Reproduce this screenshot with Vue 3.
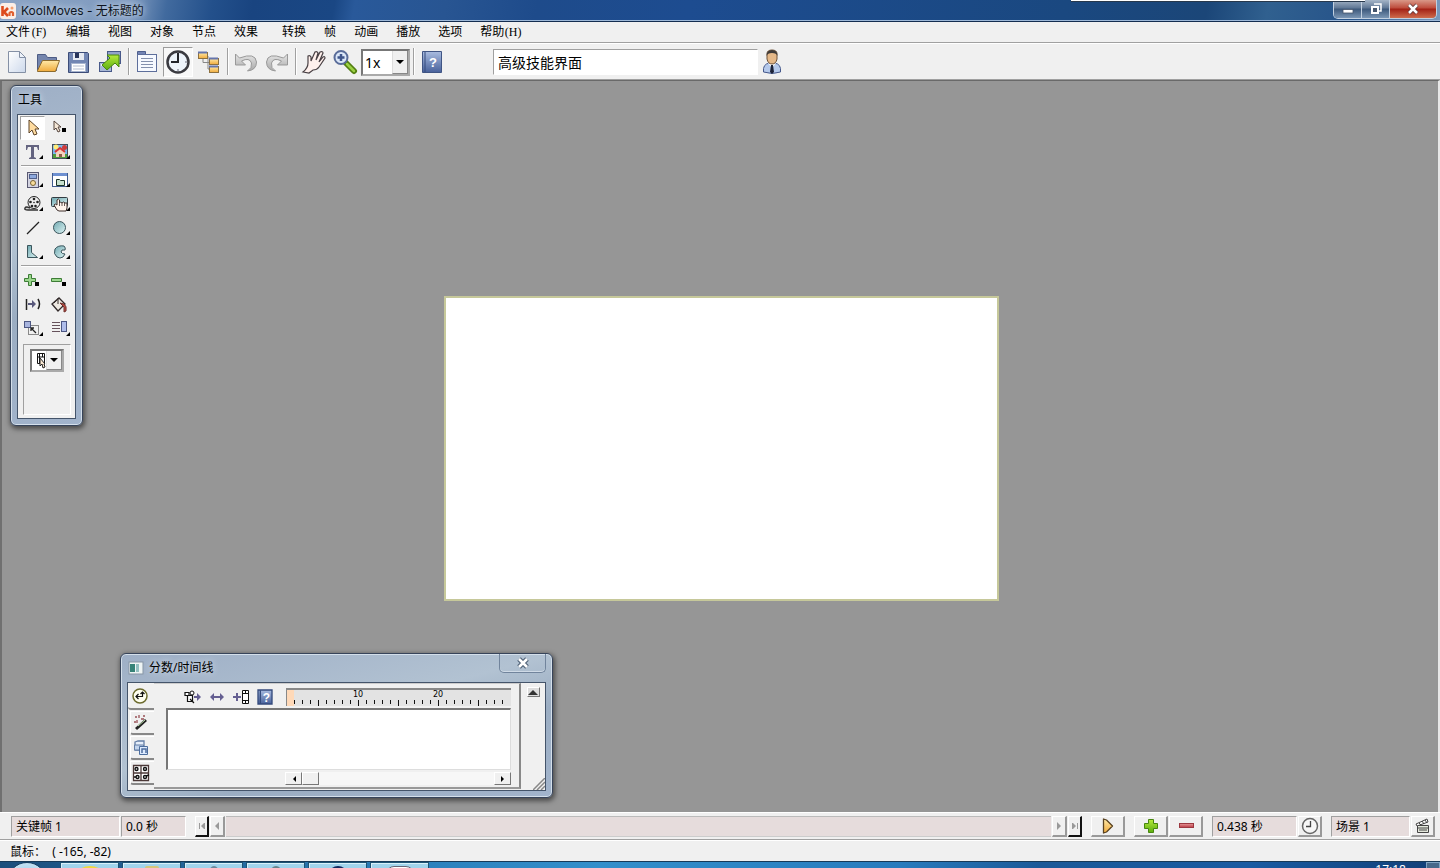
<script setup>
import { ref } from 'vue'

const menus = [
  { label: '文件', key: '(F)' },
  { label: '编辑' },
  { label: '视图' },
  { label: '对象' },
  { label: '节点' },
  { label: '效果', wide: true },
  { label: '转换' },
  { label: '帧' },
  { label: '动画' },
  { label: '播放' },
  { label: '选项' },
  { label: '帮助', key: '(H)' }
]
const ticks = Array.from({ length: 27 }, (_, i) => i + 2)
const skill = ref('高级技能界面')
</script>

<template>
  <div class="app">
    <svg class="defs" aria-hidden="true">
      <defs>
        <linearGradient id="gPage" x1="0" y1="0" x2="1" y2="1"><stop offset="0" stop-color="#fff" /><stop offset="1" stop-color="#cdd9ec" /></linearGradient>
        <linearGradient id="gFolder" x1="0" y1="0" x2="0" y2="1"><stop offset="0" stop-color="#ffe9a8" /><stop offset="1" stop-color="#f0ab3c" /></linearGradient>
        <linearGradient id="gGreen" x1="0" y1="0" x2="0" y2="1"><stop offset="0" stop-color="#b5ea3c" /><stop offset="1" stop-color="#5cae10" /></linearGradient>
        <linearGradient id="gBlue" x1="0" y1="0" x2="0" y2="1"><stop offset="0" stop-color="#a9bce0" /><stop offset="1" stop-color="#48619b" /></linearGradient>
        <linearGradient id="gGray" x1="0" y1="0" x2="0" y2="1"><stop offset="0" stop-color="#e6e6e6" /><stop offset="1" stop-color="#a8a8a8" /></linearGradient>
        <linearGradient id="gTeal" x1="0" y1="0" x2="1" y2="1"><stop offset="0" stop-color="#6fa8b0" /><stop offset="1" stop-color="#def4f4" /></linearGradient>
        <linearGradient id="gRed" x1="0" y1="0" x2="0" y2="1"><stop offset="0" stop-color="#e79a9a" /><stop offset="1" stop-color="#b93a44" /></linearGradient>
      </defs>
    </svg>

    <header class="titlebar">
      <svg class="logo" width="16" height="16" viewBox="0 0 16 16">
        <rect width="16" height="16" rx="3" fill="#fbeee6" />
        <path d="M2.500 3v10M8 5L4 9l4 4" fill="none" stroke="#dd4a1c" stroke-width="2.600" />
        <path d="M9.500 13V9.500M9.500 10q2-2 3.500 0v3" fill="none" stroke="#e06030" stroke-width="2.200" />
        <circle cx="12" cy="5" r="1.500" fill="#f4a070" />
      </svg>
      <span class="app-title">KoolMoves - 无标题的</span>
      <span class="sliver"></span>
      <div class="win-buttons">
        <button aria-label="最小化"><svg width="12" height="12" viewBox="0 0 12 12"><rect x="1" y="6.500" width="10" height="3.500" fill="#fff" stroke="#46566d" stroke-width=".8" /></svg></button>
        <button aria-label="还原"><svg width="12" height="12" viewBox="0 0 12 12"><path d="M4 1h7v7h-2" fill="none" stroke="#fff" stroke-width="1.500" /><rect x="2" y="4" width="6" height="6" fill="#46566d" stroke="#fff" stroke-width="2" /></svg></button>
        <button class="close" aria-label="关闭"><svg width="12" height="12" viewBox="0 0 12 12"><path d="M2 2l8 8M10 2l-8 8" stroke="#5b3436" stroke-width="4" /><path d="M2 2l8 8M10 2l-8 8" stroke="#fff" stroke-width="2.500" /></svg></button>
      </div>
    </header>

    <nav class="menubar">
      <button v-for="m in menus" :key="m.label" :class="{ wide: m.wide }">{{ m.label }}<span v-if="m.key" class="key">{{ m.key }}</span></button>
    </nav>

    <div class="toolbar">
      <button aria-label="新建"><svg width="24" height="24" viewBox="0 0 24 24"><path d="M3.500 1.500h11l6 6v15h-17z" fill="url(#gPage)" stroke="#8490a5" /><path d="M14.500 1.500v6h6z" fill="#eef3fa" stroke="#8490a5" /></svg></button>
      <button aria-label="打开"><svg width="26" height="24" viewBox="0 0 26 24"><path d="M2.500 20.500v-16h8l2 3h9v13z" fill="#7485ad" stroke="#4d5c85" /><path d="M2.500 20.500l5-10h17l-4 11h-18z" fill="url(#gFolder)" stroke="#8d6b2e" /></svg></button>
      <button aria-label="保存"><svg width="24" height="24" viewBox="0 0 24 24"><path d="M1.500 2.500h19l1 1v19h-20z" fill="#7286b3" stroke="#3c4c78" /><rect x="6" y="3" width="11" height="7" fill="#e6eaf2" /><rect x="8" y="3" width="4" height="5" fill="#28345a" /><rect x="4.500" y="13.500" width="14" height="8" fill="#fff" stroke="#a7b4cf" /><path d="M6 16h11M6 19h11" stroke="#b4bdd0" /></svg></button>
      <button aria-label="导出"><svg width="24" height="24" viewBox="0 0 24 24"><rect x="9.500" y="1.500" width="13" height="12" fill="#92a3ca" stroke="#48598a" /><rect x="1.500" y="12.500" width="12" height="9" fill="#a8b7d6" stroke="#48598a" /><path d="M3 15h9" stroke="#edf2fb" stroke-width="2" /><path d="M9 5h12v12l-4-4-8 7-5-5 8-7z" fill="url(#gGreen)" stroke="#47870f" /></svg></button>
      <i class="sep"></i>
      <button aria-label="属性"><svg width="24" height="24" viewBox="0 0 24 24"><path d="M2.500 5.500v-4h8v4" fill="#7384b4" stroke="#4d5e8c" /><rect x="2.500" y="4.500" width="19" height="17" fill="#f6f9ff" stroke="#5d6e9b" /><path d="M6 8.500h12M6 11.500h12M6 14.500h12M6 17.500h12" stroke="#8390ad" /></svg></button>
      <button class="on" aria-label="时间线" aria-pressed="true"><svg width="26" height="26" viewBox="0 0 26 26"><circle cx="13" cy="13" r="10.500" fill="#edf3fa" stroke="#3a3a40" stroke-width="2.500" /><path d="M13 4v9H6" fill="none" stroke="#22242a" stroke-width="2" /><path d="M13 20v2M20 13h2" stroke="#667" /></svg></button>
      <button aria-label="结构"><svg width="24" height="24" viewBox="0 0 24 24"><path d="M6 8v4.500h8M11 6v13h4" fill="none" stroke="#888" /><g fill="url(#gFolder)" stroke="#8d7140"><rect x="1.500" y="2.500" width="9" height="6" /><rect x="12.500" y="8.500" width="9" height="6" /><rect x="12.500" y="16.500" width="9" height="6" /></g><path d="M1 2.500h9M12 8.500h9M12 16.500h9" stroke="#6474ac" stroke-width="2" /></svg></button>
      <i class="sep"></i>
      <button aria-label="撤销"><svg width="24" height="24" viewBox="0 0 24 24"><path d="M1.500 4v11h10l-4-4q8-4 10 2 1 5-4 8 9-1 9-9-1-10-17-4z" fill="url(#gGray)" stroke="#999" /></svg></button>
      <button aria-label="重做"><svg width="24" height="24" viewBox="0 0 24 24"><path d="M22.500 4v11h-10l4-4q-8-4-10 2-1 5 4 8-9-1-9-9 1-10 17-4z" fill="url(#gGray)" stroke="#999" /></svg></button>
      <i class="sep"></i>
      <button aria-label="平移"><svg width="26" height="26" viewBox="0 0 26 26"><path d="M2 23q5-4 5-9L7 7q2-1 3 1v4l4-9q2-1 3 1l-2 7 4-8q3-1 3 1l-4 9 4-5q2-1 2 1l-6 9q-2 3-6 3l-4 3z" fill="#fff1ed" stroke="#484044" stroke-width="1.200" /></svg></button>
      <button aria-label="缩放"><svg width="26" height="26" viewBox="0 0 26 26"><path d="M14 14l8 8" stroke="#527e10" stroke-width="6" stroke-linecap="round" /><path d="M15 15l7 7" stroke="#9bd043" stroke-width="2.500" stroke-linecap="round" /><circle cx="9" cy="8.500" r="6.500" fill="#dbe7f8" stroke="#596c99" stroke-width="2" /><path d="M9 5v7M5.500 8.500h7" stroke="#3e558b" stroke-width="2.500" /></svg></button>
      <span class="combo zoom-combo">
        <select aria-label="缩放倍数"><option>1x</option></select><i class="drop"></i>
      </span>
      <i class="sep"></i>
      <button aria-label="帮助"><svg width="24" height="24" viewBox="0 0 24 24"><path d="M2.500 1.500h19v21h-19z" fill="url(#gBlue)" stroke="#405584" /><path d="M5 2v20" stroke="#344a7c" /><text class="help-mark" x="13" y="17" text-anchor="middle">?</text></svg></button>
      <input v-model="skill" class="skill" type="text" aria-label="技能界面" />
      <button class="user" aria-label="用户"><svg width="20" height="26" viewBox="0 0 20 26"><path d="M1.500 23q-1-8 6-9h5q7 1 6 9-8 3-17 0z" fill="#b5c9eb" stroke="#46598c" /><path d="M6 14l4 5 4-5z" fill="#fff" /><path d="M9 16h2l1 7-2 2-2-2z" fill="#1c2238" /><path d="M5 5q0-4 5-4t5 4v5q-1 5-5 5t-5-5z" fill="#e5b888" stroke="#6c5137" /><path d="M4.500 7q0-6 5.500-6t5.500 6q-1-3-5.500-3T4.500 7z" fill="#3e3a38" /></svg></button>
    </div>

    <main class="stage">
      <div class="canvas"></div>

      <section class="float tools">
        <h2>工具</h2>
        <div class="tool-body">
          <div class="grid">
            <button class="on" aria-label="选择"><svg viewBox="0 0 24 24"><path d="M8 4v13l3-3 2 5 3-1-2-5h4z" fill="#ffdca0" stroke="#5e4428" /></svg></button>
            <button aria-label="节点选择"><svg viewBox="0 0 24 24"><path d="M6 5v9l2-2 2 4 2-1-2-4h3z" fill="#f5e8d8" stroke="#54443d" /><path d="M14 12h4v4h-4z" /></svg></button>
            <button aria-label="文字"><svg viewBox="0 0 24 24"><path d="M5 5h13v5h-1l-1-3h-3v10l2 1v1H8v-1l2-1V7H7l-1 3H5z" fill="#646480" /><path d="M22 15v4h-4z" /></svg></button>
            <button aria-label="图片"><svg viewBox="0 0 24 24"><rect x="4.500" y="4.500" width="15" height="14" fill="#79b7ed" stroke="#454e5d" /><path d="M5 14h14v4H5z" fill="#4d9d3c" /><circle cx="8" cy="7" r="2.500" fill="#ffec77" /><path d="M8 12l4-4 5 4v5H8z" fill="#f4d2bd" /><path d="M7 12l5-4 5 4" fill="none" stroke="#d83535" stroke-width="2" /><path d="M11 14h3v3h-3z" fill="#8d5b48" /><circle cx="16.500" cy="7.500" r="2.500" fill="#cf3a3a" /><path d="M22 15v4h-4z" /></svg></button>
          </div>
          <i class="rule"></i>
          <div class="grid">
            <button aria-label="播放器"><svg viewBox="0 0 24 24"><rect x="6.500" y="4.500" width="11" height="15" fill="#d4d4e1" stroke="#595971" /><rect x="8.500" y="6.500" width="7" height="4" fill="#8da8dd" stroke="#50608c" /><circle cx="12" cy="15" r="2.500" fill="#f8dd9b" stroke="#796335" /><path d="M22 15v4h-4z" /></svg></button>
            <button aria-label="组件"><svg viewBox="0 0 24 24"><rect x="4.500" y="5.500" width="15" height="13" fill="#fff" stroke="#405b8d" /><path d="M5 6.500h14" stroke="#6e90d1" stroke-width="3" /><path d="M8.500 17.500v-6h3l1 1h4v5z" fill="#c7e0cf" stroke="#1c352b" /><path d="M22 15v4h-4z" /></svg></button>
            <button aria-label="影片"><svg viewBox="0 0 24 24"><path d="M9 16q-4-2-5 0t3 2h10" fill="#d2d2d2" stroke="#333" stroke-width="1.500" /><circle cx="13" cy="10.500" r="6" fill="#eee" stroke="#222" /><g fill="#222"><circle cx="13" cy="7" r="1.300" /><circle cx="16.500" cy="10" r="1.300" /><circle cx="14.500" cy="14" r="1.300" /><circle cx="11" cy="14" r="1.300" /><circle cx="9.500" cy="10" r="1.300" /><circle cx="13" cy="10.500" r=".8" /></g><path d="M22 15v4h-4z" /></svg></button>
            <button aria-label="按钮"><svg viewBox="0 0 24 24"><rect x="3.500" y="5.500" width="16" height="9" rx="1" fill="url(#gTeal)" stroke="#333c42" /><path d="M9 18l-3-5q1-2 3 0V8q1.500-2 2.500 0v3l1-1 1.500 1 1.500-1 1.500 1 2 0v5l-1 3h-7z" fill="#fff4ec" stroke="#3e302d" /><path d="M11.500 11v3M14 11v3M16.500 11v3" stroke="#3e302d" stroke-width=".8" /><path d="M22 15v4h-4z" /></svg></button>
            <button aria-label="直线"><svg viewBox="0 0 24 24"><path d="M6 18L18 6" stroke="#222" stroke-width="1.300" /></svg></button>
            <button aria-label="椭圆"><svg viewBox="0 0 24 24"><circle cx="11.500" cy="11.500" r="6" fill="url(#gTeal)" stroke="#3b555c" /><path d="M22 15v4h-4z" /></svg></button>
            <button aria-label="多边形"><svg viewBox="0 0 24 24"><path d="M6.500 5.500h4v7l6 5h-10z" fill="url(#gTeal)" stroke="#3b555c" /><path d="M22 15v4h-4z" /></svg></button>
            <button aria-label="曲线形状"><svg viewBox="0 0 24 24"><path d="M16 6q2 2 1 4-4-1-4 2 1 2 4 2l-2 3q-3 2-6 0-4-3-2-8 3-4 9-3z" fill="url(#gTeal)" stroke="#3b555c" /><path d="M22 15v4h-4z" /></svg></button>
          </div>
          <i class="rule"></i>
          <div class="grid lower">
            <button aria-label="添加节点"><svg viewBox="0 0 24 24"><path d="M7.500 5.500h3v4h4v3h-4v4h-3v-4h-4v-3h4z" fill="#9bd78d" stroke="#3d7c36" /><path d="M14 13h4v4h-4z" /></svg></button>
            <button aria-label="删除节点"><svg viewBox="0 0 24 24"><path d="M3.500 9.500h10v3h-10z" fill="#9bd78d" stroke="#3d7c36" /><path d="M14 13h4v4h-4z" /></svg></button>
            <button aria-label="变形"><svg viewBox="0 0 24 24"><path d="M5.500 6v11M17 6q3 5 0 10" fill="none" stroke="#222" stroke-width="1.500" /><path d="M7 10h4V7l4 4-4 4v-3H7z" fill="#59597c" /></svg></button>
            <button aria-label="填充"><svg viewBox="0 0 24 24"><path d="M4 11l7-6 6 6-7 7z" fill="#eee9e2" stroke="#332b2b" stroke-width="1.300" /><path d="M10 5v6M6 10l5-5" stroke="#332b2b" /><path d="M12 10l4 1q3 2 2 7l-2 1v-5z" fill="#bd4b42" stroke="#70322e" /></svg></button>
            <button aria-label="缩放对象"><svg viewBox="0 0 24 24"><path d="M7.500 8.500h10v9h-10z" fill="none" stroke="#222" stroke-dasharray="1 1" /><rect x="3.500" y="4.500" width="6" height="6" fill="#a7b4de" stroke="#4c5783" /><path d="M10 11l5 5M10 14v-3h3" fill="none" stroke="#222" stroke-width="1.300" /><path d="M22 15v4h-4z" /></svg></button>
            <button aria-label="排列"><svg viewBox="0 0 24 24"><path d="M4 5.500h8M4 8.500h8M4 11.500h8M4 14.500h8" stroke="#66525b" /><rect x="13.500" y="4.500" width="5" height="10" fill="#afbdea" stroke="#4c5783" /><path d="M22 15v4h-4z" /></svg></button>
          </div>
          <div class="options">
            <span class="combo tool-combo">
              <select aria-label="工具选项"><option></option></select>
              <svg class="tool-icon" width="10" height="18" viewBox="0 0 10 18"><path d="M1.500 1.500h7v10h-7zM3.500 1v10M6.500 1v4M1 5h8" fill="#fff" stroke="#111" /><path d="M4 6v8l2-2 1 4 2-1-1-3h1z" fill="#fce9d3" stroke="#222" /></svg>
              <i class="drop"></i>
            </span>
          </div>
        </div>
      </section>

      <section class="float timeline">
        <div class="tl-title">
          <svg width="16" height="14" viewBox="0 0 16 14"><rect x="1" y="1" width="14" height="12" fill="#eef4f4" stroke="#8796a5" /><rect x="2" y="3" width="5" height="8" fill="#368277" /><rect x="8" y="3" width="3" height="8" fill="#92bfc0" /></svg>
          <h2>分数/时间线</h2>
          <button class="tl-close" aria-label="关闭时间线"><svg width="14" height="12" viewBox="0 0 14 12"><path d="M3 2l8 8M11 2l-8 8" stroke="#53657a" stroke-width="5" /><path d="M3 2l8 8M11 2l-8 8" stroke="#fff" stroke-width="2.500" /></svg></button>
        </div>
        <div class="tl-body">
          <div class="tabs">
            <button class="active" aria-label="时间"><svg width="18" height="18" viewBox="0 0 18 18"><circle cx="9" cy="9" r="7" fill="#fffff0" stroke="#6c6b2e" stroke-width="1.500" /><path d="M11.500 5v4.500H5M7.500 7L5 9.500 7.500 12M9.500 7l2-2 2 2" fill="none" stroke="#111" stroke-width="1.200" /></svg></button>
            <button aria-label="特效"><svg width="18" height="18" viewBox="0 0 18 18"><path d="M4 15L14 6" stroke="#222" stroke-width="3" /><path d="M6 12l7-6" stroke="#bda" /><path d="M3 3h2M7 1v3M9 5h3M5 6v3M2 8h2M11 2h2" stroke="#985055" stroke-width="1.300" /></svg></button>
            <button aria-label="声音"><svg width="18" height="18" viewBox="0 0 18 18"><path d="M3 3l3-1h6v9H3z" fill="#e5eefa" stroke="#637da5" stroke-width="1.300" /><path d="M2.500 6h9v5h-9z" fill="#c3d5ed" stroke="#637da5" /><path d="M7.500 7.500h8v8h-8z" fill="#dceafe" stroke="#4d6e9e" /><path d="M10 14v-4h4v4" fill="none" stroke="#4d6e9e" stroke-width="1.500" /></svg></button>
            <button aria-label="片段"><svg width="18" height="18" viewBox="0 0 18 18"><path d="M1.500 1.500h15v15h-15zM9 1v16M1 9h16" fill="#fff" stroke="#4c3938" stroke-width="1.300" /><g fill="none" stroke="#111" stroke-width="1.400"><circle cx="4.500" cy="5" r="1.500" /><circle cx="13" cy="5" r="1.500" /><circle cx="5.500" cy="13" r="1.500" /><circle cx="13" cy="13" r="1.500" /><path d="M2 13h2M14 12l3-1" /></g></svg></button>
          </div>
          <div class="panel">
            <div class="tl-head">
              <div class="tl-tools">
                <button aria-label="移动关键帧"><svg width="18" height="16" viewBox="0 0 18 16"><path d="M3.500 6.500h5v6h-5z" fill="#fff" stroke="#111" stroke-width="1.200" /><path d="M1 3.500h4v3h-4zM6 10l4 4" fill="#fff" stroke="#111" stroke-width="1.200" /><circle cx="8" cy="4" r="2" fill="#fff" stroke="#111" /><path d="M10 7h3V4l4 4-4 4V9h-3z" fill="#655f91" /></svg></button>
                <button aria-label="伸缩"><svg width="16" height="16" viewBox="0 0 16 16"><path d="M1 8l4-4v3h6V4l4 4-4 4V9H5v3z" fill="#655f91" /></svg></button>
                <button aria-label="添加帧"><svg width="18" height="16" viewBox="0 0 18 16"><path d="M1 8h8M5 4v8" stroke="#655f91" stroke-width="2" /><path d="M10.500 1.500h6v13h-6zM10 4.500h7M10 11.500h7M13.500 1v3M13.500 12v3" fill="#fff" stroke="#111" /></svg></button>
                <button aria-label="时间线帮助"><svg width="16" height="16" viewBox="0 0 24 24"><path d="M1.500 1.500h21v21h-21z" fill="url(#gBlue)" stroke="#344a7c" stroke-width="2" /><path d="M5 2v20" stroke="#344a7c" stroke-width="2" /><text class="help-mark big" x="14" y="19" text-anchor="middle">?</text></svg></button>
              </div>
              <div class="ruler">
                <i class="first"></i>
                <span v-for="n in ticks" :key="n" class="tick" :class="{ long: n % 5 === 0 }"><b v-if="n % 10 === 0">{{ n }}</b></span>
              </div>
            </div>
            <div class="list"></div>
            <div class="scroll">
              <button aria-label="向左滚动"><svg width="6" height="8" viewBox="0 0 6 8"><path d="M5 1v6L2 4z" /></svg></button>
              <button aria-label="滚动滑块"></button>
              <i></i>
              <button aria-label="向右滚动"><svg width="6" height="8" viewBox="0 0 6 8"><path d="M1 1v6l3-3z" /></svg></button>
            </div>
          </div>
          <div class="side">
            <button aria-label="折叠"><svg width="10" height="6" viewBox="0 0 10 6"><path d="M0 6l5-5 5 5z" fill="#333" /></svg></button>
            <svg class="grip" width="12" height="12" viewBox="0 0 12 12"><path d="M0 12L12 0M4 12l8-8M8 12l4-4" stroke="#888" stroke-width="1.500" /></svg>
          </div>
        </div>
      </section>
    </main>

    <div class="transport">
      <span class="field f-key">关键帧 1</span>
      <span class="field f-time">0.0 秒</span>
      <button class="nav strong first-nav" aria-label="首帧"><svg width="8" height="8" viewBox="0 0 8 8"><path d="M1.500 1v6M6.500 1v6" stroke="#999" /><path d="M6 1v6L3 4z" fill="#999" /></svg></button>
      <button class="nav" aria-label="上一帧"><svg width="6" height="8" viewBox="0 0 6 8"><path d="M5 0v8L1 4z" fill="#999" /></svg></button>
      <span class="track"></span>
      <button class="nav" aria-label="下一帧"><svg width="6" height="8" viewBox="0 0 6 8"><path d="M1 0v8l4-4z" fill="#999" /></svg></button>
      <button class="nav strong" aria-label="末帧"><svg width="8" height="8" viewBox="0 0 8 8"><path d="M6.500 1v6M1.500 1v6" stroke="#999" /><path d="M2 1v6l3-3z" fill="#999" /></svg></button>
      <button class="act spaced" aria-label="播放"><svg width="16" height="18" viewBox="0 0 16 18"><path d="M3.500 2l3 1 6 6-6 6-3 1z" fill="url(#gFolder)" stroke="#5a4321" stroke-width="1.300" stroke-linejoin="round" /></svg></button>
      <button class="act spaced" aria-label="添加帧"><svg width="16" height="16" viewBox="0 0 16 16"><path d="M5.500 1.500h5v4h4v5h-4v4h-5v-4h-4v-5h4z" fill="url(#gGreen)" stroke="#47870f" /></svg></button>
      <button class="act" aria-label="删除帧"><svg width="16" height="16" viewBox="0 0 16 16"><rect x="1.500" y="5.500" width="14" height="4" fill="url(#gRed)" stroke="#9c3840" /></svg></button>
      <span class="field f-len spaced">0.438 秒</span>
      <button class="sq" aria-label="时长"><svg width="18" height="18" viewBox="0 0 18 18"><circle cx="9" cy="9" r="7.500" fill="#f6f6f6" stroke="#666" stroke-width="1.500" /><path d="M9.500 4v5.500H5" fill="none" stroke="#444" stroke-width="1.300" /></svg></button>
      <span class="field f-scene spaced">场景 1</span>
      <button class="sq" aria-label="场景"><svg width="16" height="16" viewBox="0 0 16 16"><path d="M2.500 7.500h11v7h-11z" fill="#e4e8dc" stroke="#444" /><path d="M1 6l11-5 1 3L2 8zM4 5l2 2M7 3l2 3M10 2l2 3M3 10h10M4 12h8" fill="#fff" stroke="#444" /></svg></button>
    </div>

    <footer class="status">鼠标：&nbsp;&nbsp;( -165, -82)</footer>

    <div class="taskbar">
      <button class="start" aria-label="开始"></button>
      <button class="task ie" aria-label="浏览器"></button>
      <button class="task dir" aria-label="文件夹"></button>
      <button class="task disc" aria-label="播放程序"></button>
      <button class="task ring" aria-label="搜索"></button>
      <button class="task dark" aria-label="音乐"></button>
      <button class="task pale" aria-label="文档"></button>
      <span class="clock">17:18</span>
      <button class="show" aria-label="显示桌面"></button>
    </div>
  </div>
</template>

<style>
html, body { margin: 0; overflow: hidden; }
</style>

<style scoped>
.app { height: 100vh; display: flex; flex-direction: column; overflow: hidden; background: #f0f0f0; color: #000; font: 12px/16px "Noto Sans", "Noto Sans CJK SC", sans-serif; }
.app *, .app *::before { box-sizing: border-box; }
.defs { position: absolute; width: 0; height: 0; }
button { margin: 0; padding: 0; border: 0; background: none; color: inherit; font: inherit; display: flex; align-items: center; justify-content: center; flex: none; }
svg { display: block; flex: none; }
h2 { margin: 0; font: inherit; }
i { display: block; }

.titlebar { flex: none; height: 22px; display: flex; align-items: center; position: relative; border-bottom: 1px solid #142d50; box-shadow: inset 0 -1px #9db8d8; background: linear-gradient(100deg, #8ba3c4 0, #7f9abf 130px, #416a9e 165px, #23508b 210px, #194480 250px, #1a4784 330px, #29599a 350px, #285592 440px, #1e4b8b 530px, #1d4c90 680px, #1a4880 1050px, #1b4678 1190px, #30608f 1250px, #27548a 1330px, #799abd 100%); }
.app-title { margin-left: 5px; line-height: 20px; font-family: Inter, "Noto Sans CJK SC", sans-serif; color: #0d1420; text-shadow: 0 0 6px #c9d7ea, 0 0 8px #c9d7ea; }
.sliver { position: absolute; top: 0; right: 75px; width: 294px; height: 1px; background: #fff; box-shadow: 0 1px #27384c; }
.win-buttons { margin: 0 3px 2px auto; align-self: stretch; display: flex; border: 1px solid #c2d0e0; border-top: 0; border-radius: 0 0 5px 5px; overflow: hidden; }
.win-buttons button { width: 28px; background: linear-gradient(#a5b5c8, #5e7694 45%, #3c587b 50%, #7b96b4); border-right: 1px solid #c2d0e0; }
.win-buttons button.close { width: 46px; border: 0; background: linear-gradient(#d99888, #bd4a3a 45%, #a32115 50%, #ce6c4c); }

.menubar { flex: none; height: 21px; padding-left: 6px; display: flex; gap: 18px; align-items: center; border-bottom: 1px solid #a0a0a0; line-height: 18px; }
.menubar button.wide { margin-right: 6px; }
.key { width: 18px; text-align: center; font: 12px/18px "Liberation Serif", serif; }

.toolbar { flex: none; height: 37px; padding: 0 2px; display: flex; gap: 1px; align-items: center; border-top: 1px solid #fff; border-bottom: 1px solid #a0a0a0; }
.toolbar button { width: 30px; height: 30px; }
.toolbar .on { border: 1px solid #9c9c9c; border-right-color: #fff; border-bottom-color: #fff; background: #f8f8f8; }
.sep { width: 2px; height: 27px; margin: 0 1px 0 2px; border-left: 1px solid #a0a0a0; border-right: 1px solid #fff; flex: none; }
.combo { position: relative; display: flex; border: 2px solid #777; border-right-color: #aaa; border-bottom-color: #aaa; background: #fff; flex: none; }
.combo select { appearance: none; width: 100%; height: 100%; border: 0; margin: 0; padding: 0 0 0 2px; background: transparent; font: 14px/20px "Noto Sans", sans-serif; color: #000; outline: 0; }
.drop { position: absolute; top: 0; right: 0; bottom: 0; width: 16px; background: #f0f0f0; border-left: 1px solid #ddd; border-right: 1px solid #888; border-bottom: 1px solid #888; pointer-events: none; display: flex; align-items: center; justify-content: center; }
.drop::before { content: ""; border: 4px solid transparent; border-top-color: #000; border-bottom: 0; }
.zoom-combo { width: 49px; height: 27px; margin-top: 2px; }
.help-mark { font: bold 13px "Liberation Sans", sans-serif; fill: #fff; }
.help-mark.big { font-size: 18px; }
.skill { margin: 0 0 0 45px; width: 265px; height: 26px; border: 1px solid #a0a0a0; border-right-color: #fff; border-bottom-color: #fff; padding: 0 4px; background: #fff; font: 14px/20px "Noto Sans", "Noto Sans CJK SC", sans-serif; color: #000; outline: 0; }
.toolbar .user { width: 26px; }

.stage { flex: 1; min-height: 0; position: relative; background: #969696; border-top: 1px solid #696969; border-left: 2px solid #707070; border-right: 2px solid #e8e8e8; display: flex; align-items: center; justify-content: center; padding: 4px 0 0 3px; }
.canvas { width: 555px; height: 305px; background: #fff; border: 2px solid #c6c89a; }

.float { position: absolute; border: 1px solid #37445a; border-radius: 6px; background: linear-gradient(165deg, #9eafc6, #b2c2d2 45%, #9badc2 65%, #a2b4cc); box-shadow: inset 0 0 0 1px #d4dfea, 1px 2px 5px 1px rgba(0, 0, 0, .5); }
.tools { left: 8px; top: 4px; width: 73px; padding: 0 6px 6px; }
.tools h2 { height: 28px; line-height: 27px; padding-left: 1px; text-shadow: 0 0 6px #e4ebf5; }
.tool-body { border: 1px solid #44546a; background: #f0f0f0; padding: 1px 3px 3px 2px; }
.grid { display: grid; grid-template-columns: 25px 25px; column-gap: 2px; }
.grid.lower { padding-top: 1px; }
.grid button { width: 25px; height: 24px; }
.grid svg { width: 24px; height: 24px; }
.grid .on { border: 1px solid #a0a0a0; border-right-color: #fff; border-bottom-color: #fff; background: #fff; }
.rule { height: 2px; margin: 1px 1px; border-top: 1px solid #a0a0a0; border-bottom: 1px solid #fff; }
.options { margin: 3px 1px 0 3px; height: 71px; padding: 4px 6px; border: 1px solid #a0a0a0; border-right-color: #fff; border-bottom-color: #fff; }
.tool-combo { width: 34px; height: 23px; }
.tool-icon { position: absolute; left: 4px; top: 1px; pointer-events: none; }

.timeline { left: 118px; bottom: 14px; width: 433px; padding: 0 6px 6px; }
.tl-title { height: 28px; display: flex; align-items: center; padding-left: 1px; }
.tl-title h2 { margin-left: 5px; text-shadow: 0 0 6px #e4ebf5; }
.tl-close { margin-left: auto; align-self: flex-start; width: 47px; height: 19px; border: 1px solid #71849c; border-top: 0; border-radius: 0 0 5px 5px; box-shadow: inset 0 -1px #cfdae6; }
.tl-body { height: 109px; display: flex; border: 1px solid #44546a; background: #f0f0f0; }
.tabs { width: 26px; padding-top: 1px; display: flex; flex-direction: column; gap: 1px; }
.tabs button { width: 24px; height: 24px; margin-left: 2px; padding-right: 3px; border: 1px solid #fff; border-right: 0; border-bottom: 2px solid #888; border-radius: 0 0 0 3px; }
.tabs .active { margin-left: 0; width: 26px; height: 26px; border-left: 0; border-top: 0; }
.panel { flex: 1; min-width: 0; padding: 4px 8px 0 12px; margin-bottom: 1px; border-right: 2px solid #888; border-bottom: 2px solid #999; border-top: 1px solid #ccc; }
.tl-head { display: flex; justify-content: space-between; }
.tl-tools { margin-left: 15px; display: flex; }
.tl-tools button { width: 24px; height: 18px; }
.ruler { width: 225px; height: 18px; background: #e3e3e3; border-top: 2px solid #888; border-left: 1px solid #888; display: flex; align-items: flex-end; overflow: hidden; }
.first { width: 7px; height: 16px; background: #ffd9b8; flex: none; }
.tick { position: relative; flex: none; width: 8px; height: 6px; }
.tick::before { content: ""; display: block; width: 1px; height: 4px; background: #111; }
.tick.long::before { height: 6px; }
.tick b { position: absolute; left: -8px; top: -9px; width: 16px; text-align: center; font: 8px/8px "DejaVu Sans", sans-serif; }
.list { height: 62px; margin-top: 2px; background: #fff; border: 2px solid #777; border-right: 1px solid #ddd; border-bottom: 1px solid #ddd; }
.scroll { margin: 2px 0 0 119px; height: 13px; display: flex; background: #f7f7f7; }
.scroll i { flex: 1; }
.scroll button { width: 17px; border: 1px solid #fff; border-right-color: #777; border-bottom-color: #777; background: #f0f0f0; }
.side { width: 24px; display: flex; flex-direction: column; align-items: center; justify-content: space-between; padding-top: 4px; }
.side button { width: 13px; height: 10px; background: #ddd; border: 1px solid #fff; border-right-color: #777; border-bottom-color: #777; }
.grip { align-self: flex-end; }

.transport { flex: none; height: 28px; padding: 3px 5px 2px 11px; display: flex; align-items: center; gap: 1px; border-top: 1px solid #fff; border-bottom: 1px solid #a0a0a0; }
.transport > * { height: 21px; flex: none; }
.field { padding-left: 4px; line-height: 19px; background: #e6dcdc; border: 1px solid #a0a0a0; border-right-color: #fff; border-bottom-color: #fff; white-space: nowrap; }
.f-key { width: 109px; }
.f-time { width: 65px; }
.f-len { width: 85px; }
.f-scene { width: 79px; }
.transport .track { flex: 1; background: #e6dcdc; border-top: 1px solid #bbb; border-bottom: 1px solid #ccc; }
.transport button { border: 1px solid #fff; border-right: 2px solid #999; border-bottom: 2px solid #999; }
.transport .nav { width: 15px; }
.transport .strong { width: 14px; border-right-color: #111; border-bottom-color: #111; }
.transport .first-nav { margin-left: 8px; }
.transport .act { width: 34px; }
.transport .sq { width: 24px; }
.transport .spaced { margin-left: 8px; }

.status { flex: none; height: 21px; padding-left: 10px; line-height: 22px; border-top: 1px solid #fff; }
.taskbar { flex: none; height: 7px; overflow: hidden; display: flex; position: relative; border-top: 1px solid #173a58; background: linear-gradient(90deg, #1b4e7c 0, #2c81bd 430px, #338fcb 600px, #287bbd 900px, #1b5998 1040px, #195ba2 1250px, #113f77 100%); }
.taskbar .start { width: 40px; height: 40px; margin: 0 13px 0 7px; border-radius: 50%; background: radial-gradient(#8ec5e8, #d8edf8); border: 1px solid #153d5f; }
.task { width: 59px; height: 30px; margin-right: 3px; background: linear-gradient(#a5d6ed, #7fc3e4); border: 1px solid #1c5374; box-shadow: inset 1px 1px #d8f1fb; align-items: flex-start; }
.task::before { content: ""; width: 28px; height: 20px; margin-top: 3px; border-radius: 50%; }
.ie::before { border: 3px solid #f0d83e; }
.dir::before { width: 14px; background: #d7c67a; border-radius: 2px; }
.disc::before { width: 12px; background: #69889b; }
.ring::before { width: 14px; border: 2px solid #67838c; }
.dark::before { width: 20px; border: 3px solid #13295e; }
.pale::before { background: #fff; border: 1px solid #667; border-radius: 8px; }
.clock { margin: 0 20px 0 auto; color: #fff; line-height: 16px; }
.show { width: 14px; height: 20px; border: 1px solid #80a5c4; background: #47698b; }
</style>
